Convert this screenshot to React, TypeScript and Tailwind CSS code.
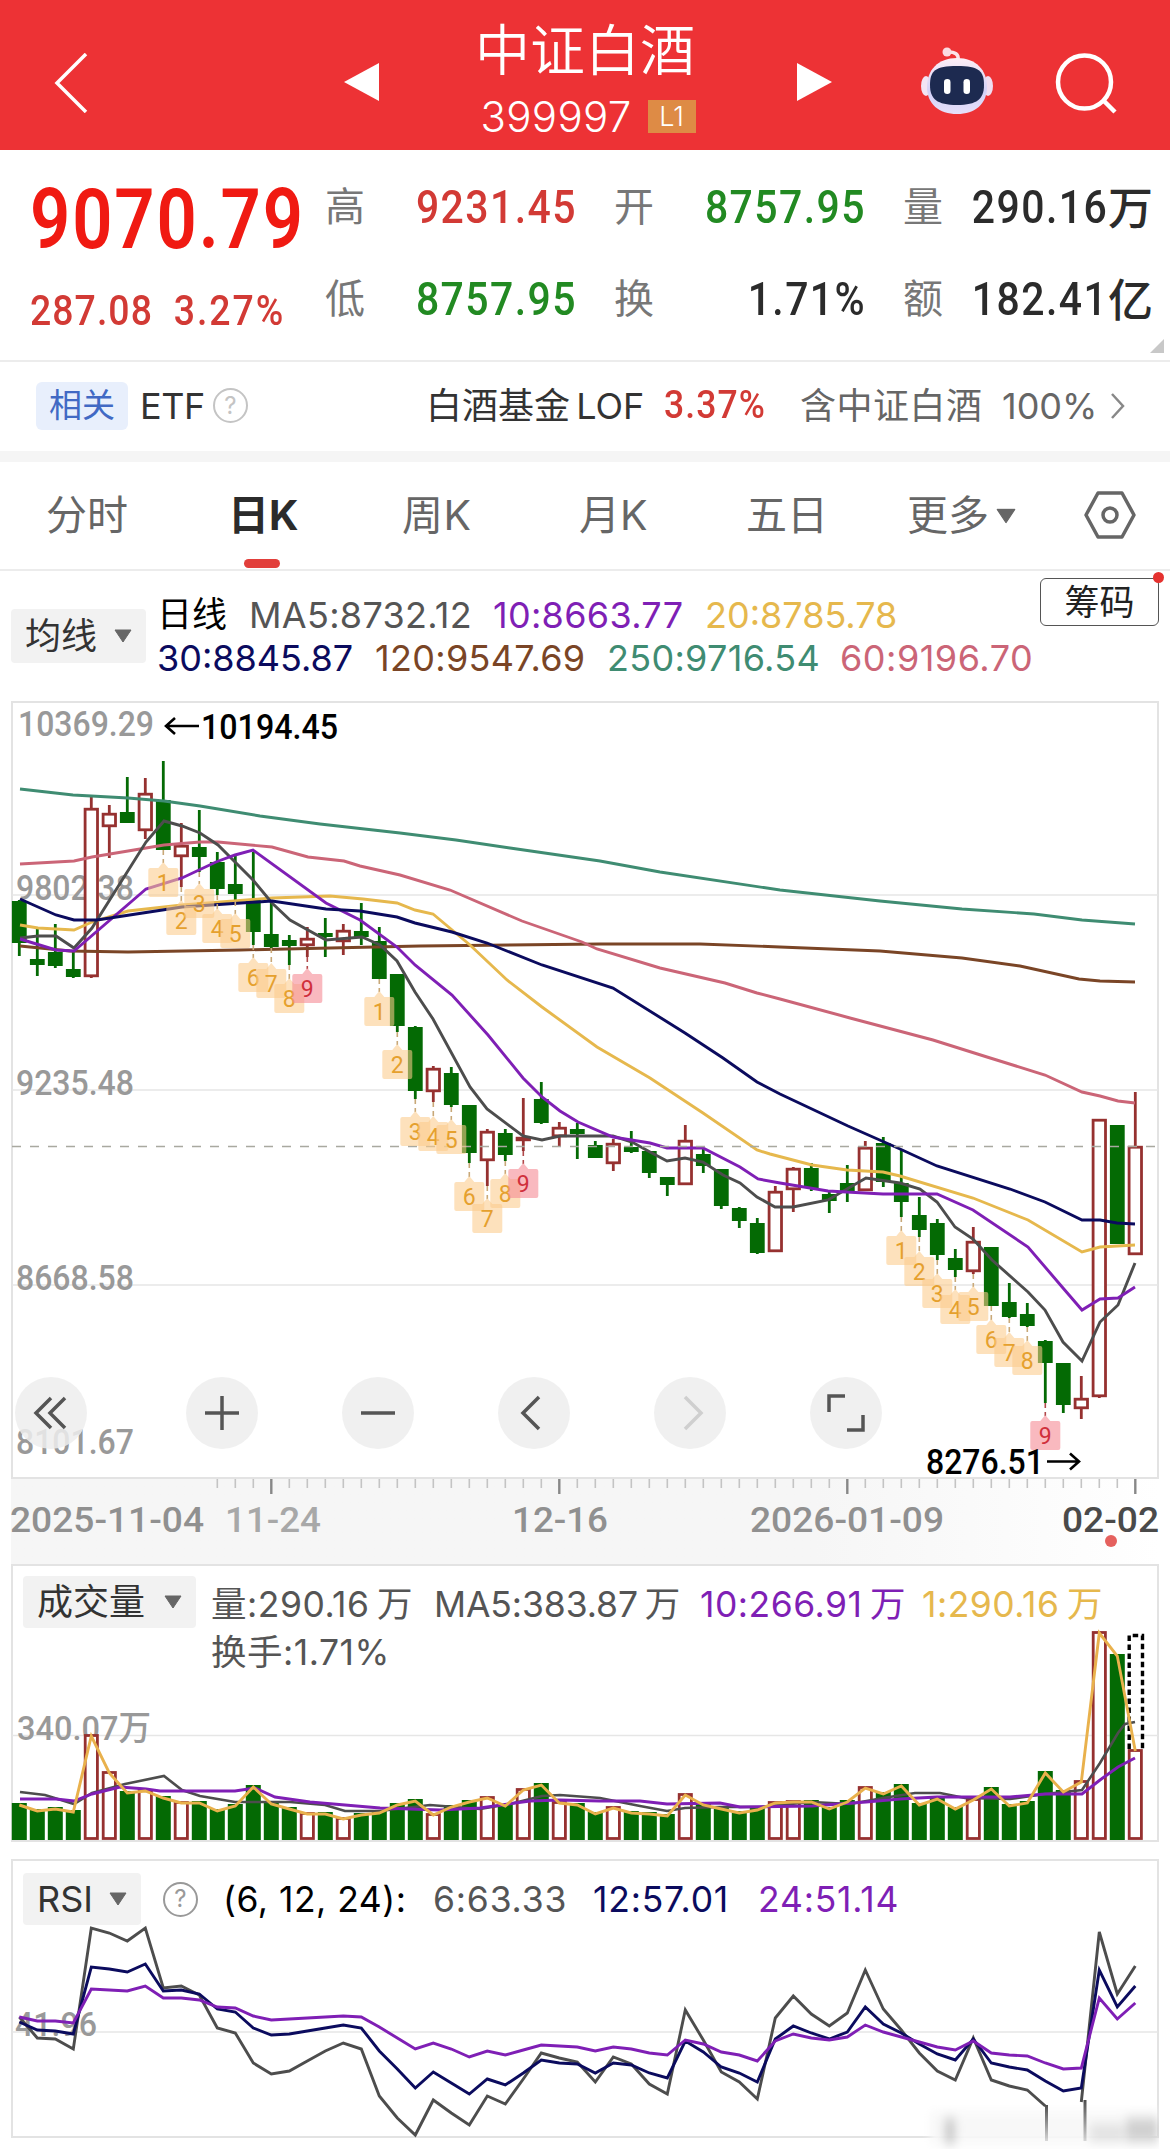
import React from "react";

const UP = "#963130";
const DOWN = "#046a04";

const STEP = 18;
const xAt = (i: number) => 19.3 + STEP * i;

// [direction, high, open/close top, open/close bottom, low]
type Candle = [string, number, number, number, number];

const candles: Candle[] = [
  ["g", 900, 901, 943, 956], ["g", 929, 959, 965, 976], ["g", 924, 952, 966, 968],
  ["g", 952, 969, 977, 978], ["r", 797, 808, 977, 978], ["r", 805, 813, 827, 858],
  ["g", 777, 812, 823, 823], ["r", 778, 793, 831, 839], ["g", 761, 800, 850, 850],
  ["r", 823, 845, 857, 887], ["g", 810, 847, 857, 872], ["g", 852, 862, 889, 895],
  ["g", 856, 884, 894, 901], ["g", 852, 899, 932, 945], ["g", 903, 934, 947, 948],
  ["g", 935, 940, 946, 965], ["r", 927, 938, 946, 957], ["g", 918, 933, 937, 957],
  ["r", 924, 930, 942, 955], ["g", 903, 931, 937, 945], ["g", 927, 941, 979, 979],
  ["g", 974, 974, 1026, 1032], ["g", 1026, 1027, 1091, 1099], ["r", 1066, 1068, 1092, 1102],
  ["g", 1067, 1073, 1105, 1107], ["g", 1105, 1105, 1153, 1163], ["r", 1129, 1131, 1161, 1186],
  ["g", 1129, 1133, 1155, 1161], ["r", 1098, 1137, 1141, 1151], ["g", 1082, 1099, 1123, 1124],
  ["r", 1122, 1127, 1137, 1146], ["g", 1123, 1129, 1134, 1159], ["g", 1141, 1145, 1158, 1158],
  ["r", 1139, 1143, 1164, 1171], ["g", 1131, 1147, 1152, 1153], ["g", 1151, 1151, 1173, 1178],
  ["g", 1177, 1177, 1185, 1196], ["r", 1125, 1140, 1185, 1185], ["g", 1148, 1154, 1166, 1173],
  ["g", 1169, 1169, 1206, 1209], ["g", 1207, 1208, 1221, 1228], ["g", 1218, 1223, 1253, 1254],
  ["r", 1186, 1191, 1252, 1252], ["r", 1167, 1168, 1190, 1212], ["g", 1163, 1168, 1188, 1191],
  ["g", 1190, 1194, 1201, 1213], ["g", 1165, 1183, 1191, 1202], ["r", 1141, 1147, 1191, 1191],
  ["g", 1137, 1143, 1182, 1187], ["g", 1149, 1183, 1202, 1217], ["g", 1197, 1215, 1230, 1237],
  ["g", 1219, 1223, 1255, 1260], ["g", 1249, 1258, 1270, 1277], ["r", 1227, 1241, 1272, 1274],
  ["g", 1247, 1247, 1306, 1306], ["g", 1283, 1302, 1317, 1318], ["g", 1303, 1314, 1326, 1327],
  ["g", 1340, 1341, 1363, 1403], ["g", 1363, 1363, 1405, 1413], ["r", 1376, 1398, 1409, 1419],
  ["r", 1119, 1119, 1397, 1398], ["g", 1125, 1125, 1244, 1244], ["r", 1092, 1146, 1255, 1255],
];

// [candle index, count, top of the tag]
const tags: [number, number, number][] = [
  [8, 1, 868], [9, 2, 906], [10, 3, 889], [11, 4, 914], [12, 5, 919], [13, 6, 963],
  [14, 7, 969], [15, 8, 984], [16, 9, 974],
  [20, 1, 997], [21, 2, 1050], [22, 3, 1117], [23, 4, 1122], [24, 5, 1125], [25, 6, 1182],
  [26, 7, 1204], [27, 8, 1179], [28, 9, 1169],
  [49, 1, 1236], [50, 2, 1257], [51, 3, 1279], [52, 4, 1295], [53, 5, 1292], [54, 6, 1325],
  [55, 7, 1338], [56, 8, 1346], [57, 9, 1421],
];

const priceLines = [
  {
    color: "#3f8c72",
    points:
      "20,789 73,795 128,798 164,801 200,806 260,816 320,824 400,833 456,840 510,848 600,861 660,872 780,890 880,901 962,909 1034,914 1082,920 1135,924",
  },
  {
    color: "#7a4526",
    points:
      "20,946 70,951 128,952 240,950 330,948 420,946 600,944 700,944 780,947 880,951 962,958 1020,966 1079,979 1100,981 1135,982",
  },
  {
    color: "#cb6577",
    points:
      "20,864 74,861 92,857 128,851 164,845 200,842 218,842 272,847 308,857 344,861 360,866 400,875 450,890 522,921 582,942 597,949 660,968 725,983 757,993 780,999 850,1018 933,1040 987,1057 1045,1075 1082,1092 1100,1096 1118,1101 1135,1103",
  },
  {
    color: "#e6b84d",
    points:
      "20,925 38,928 74,930 92,922 128,911 182,905 272,898 330,896 363,899 397,903 415,910 433,914 470,945 507,980 542,1007 597,1047 650,1078 703,1113 757,1150 770,1154 812,1165 847,1170 883,1172 900,1176 973,1198 1028,1220 1082,1252 1100,1247 1135,1245",
  },
  {
    color: "#4d4d4d",
    points:
      "20,938 38,936 56,936 74,948 92,928 146,842 164,821 182,826 200,833 218,845 253,880 272,903 290,920 326,940 362,937 380,945 397,961 415,992 433,1019 470,1087 487,1109 523,1136 542,1140 560,1136 613,1136 632,1142 650,1152 667,1161 685,1158 703,1162 723,1175 740,1183 757,1197 775,1207 793,1207 828,1200 866,1178 900,1183 920,1189 937,1202 955,1227 973,1239 992,1260 1028,1292 1045,1310 1063,1342 1082,1361 1100,1322 1118,1305 1135,1263",
  },
  {
    color: "#7f1fb5",
    points:
      "20,939 56,950 74,951 146,889 182,878 216,862 235,855 253,850 326,903 360,920 397,947 415,965 452,995 488,1035 523,1078 542,1097 560,1111 578,1122 613,1137 650,1143 667,1148 703,1148 740,1167 758,1179 780,1183 828,1191 883,1194 937,1194 973,1210 1028,1247 1063,1288 1082,1310 1100,1299 1118,1298 1135,1287",
  },
  {
    color: "#0b0b5e",
    points:
      "20,899 56,915 74,920 97,920 182,907 272,901 326,909 360,911 397,917 415,923 452,932 487,943 542,965 613,988 685,1033 723,1058 757,1082 780,1094 848,1126 900,1149 937,1166 1010,1189 1045,1202 1082,1220 1100,1220 1117,1223 1135,1224",
  },
];

const volumeTops = [
  1803, 1809, 1807, 1810, 1734, 1771, 1791, 1789, 1796, 1801, 1801, 1809, 1804, 1785, 1802, 1807,
  1812, 1812, 1817, 1813, 1811, 1803, 1799, 1813, 1805, 1800, 1796, 1804, 1788, 1783, 1801, 1803,
  1812, 1806, 1811, 1812, 1814, 1793, 1803, 1807, 1811, 1808, 1801, 1800, 1800, 1807, 1800, 1786,
  1792, 1784, 1803, 1797, 1807, 1798, 1787, 1804, 1801, 1771, 1790, 1780, 1631, 1654, 1749,
];

const rsi24 = [
  2017, 2021, 2021, 2023, 1989, 1990, 1991, 1986, 1998, 1998, 2000, 2007, 2008, 2016, 2020, 2019,
  2018, 2017, 2016, 2017, 2027, 2038, 2049, 2043, 2049, 2057, 2051, 2055, 2050, 2045, 2046, 2047,
  2051, 2047, 2049, 2053, 2055, 2040, 2044, 2052, 2055, 2061, 2041, 2034, 2038, 2040, 2037, 2025,
  2032, 2037, 2042, 2047, 2050, 2041, 2053, 2055, 2056, 2063, 2069, 2068, 1998, 2019, 2003,
];

const rsi12 = [
  2022, 2030, 2031, 2034, 1967, 1969, 1972, 1964, 1991, 1990, 1994, 2009, 2012, 2028, 2035, 2034,
  2031, 2028, 2025, 2028, 2051, 2069, 2088, 2072, 2083, 2094, 2079, 2085, 2073, 2060, 2063, 2064,
  2073, 2063, 2065, 2073, 2078, 2041, 2052, 2067, 2073, 2082, 2039, 2026, 2033, 2039, 2032, 2007,
  2024, 2033, 2044, 2054, 2060, 2039, 2063, 2067, 2070, 2081, 2091, 2088, 1970, 2007, 1986,
];

const rsi6 = [
  2017, 2038, 2039, 2049, 1928, 1933, 1941, 1928, 1988, 1986, 1995, 2028, 2033, 2063, 2074, 2071,
  2061, 2051, 2043, 2049, 2096, 2118, 2135, 2100, 2113, 2125, 2096, 2104, 2079, 2053, 2058, 2062,
  2082, 2057, 2064, 2084, 2094, 2010, 2040, 2072, 2082, 2099, 2018, 1996, 2014, 2026, 2013, 1970,
  2009, 2030, 2053, 2071, 2080, 2038, 2080, 2086, 2090, 2106,
];

const toPoints = (values: number[], from = 0) =>
  values.map((y, i) => `${xAt(i + from)},${y}`).join(" ");

const Line: React.FC<{ points: string; color: string; width?: number }> = ({
  points,
  color,
  width = 2.9,
}) => <polyline points={points} fill="none" stroke={color} strokeWidth={width} />;

interface LabelProps {
  x: number;
  y: number;
  w: number;
  size?: number;
  fill?: string;
  weight?: number;
  children: string;
}

const Label: React.FC<LabelProps> = ({ x, y, w, size = 35, fill = "#999", weight = 500, children }) => (
  <text
    x={x}
    y={y}
    textLength={w}
    lengthAdjust="spacingAndGlyphs"
    fontSize={size}
    fontWeight={weight}
    fill={fill}
    className="font-[Roboto,'Noto_Sans_CJK_SC',sans-serif]">
    {children}
  </text>
);

const Caret: React.FC<{ className?: string }> = ({ className = "" }) => (
  <svg viewBox="0 0 18 14" className={`w-[18px] h-[14px] shrink-0 ${className}`}>
    <path d="M1 1h16L9 13z" fill="#666" stroke="#666" strokeLinejoin="round" />
  </svg>
);

const Help: React.FC<{ color: string; className?: string }> = ({ color, className = "" }) => (
  <span
    className={`flex items-center justify-center w-[35px] h-[35px] rounded-full border-[2.5px] text-[24px] leading-none font-[Inter,sans-serif] ${className}`}
    style={{ borderColor: color, color }}>
    ?
  </span>
);

const Robot: React.FC = () => (
  <svg viewBox="0 0 74 70" className="w-[74px] h-[70px]">
    <defs>
      <linearGradient id="shell" x1="0" y1="0" x2="0" y2="1">
        <stop offset="0" stopColor="#fdeef6" />
        <stop offset="0.6" stopColor="#d3d0f7" />
        <stop offset="1" stopColor="#e6e0fa" />
      </linearGradient>
    </defs>
    <path d="M38 15c1-6-3-8-10-8" fill="none" stroke="#fbe3ea" strokeWidth="3.5" />
    <circle cx="27" cy="7" r="4.500" fill="#fbdbe2" />
    <ellipse cx="6" cy="41" rx="5" ry="10" fill="#f3e4f4" />
    <ellipse cx="68" cy="41" rx="5" ry="10" fill="#f0dcf0" />
    <path d="M37 13c19 0 30 12 30 29 0 17-12 27-30 27S7 59 7 42C7 25 18 13 37 13z" fill="url(#shell)" />
    <path d="M37 21c22 0 27 5 27 19s-7 20-27 20S10 54 10 40s5-19 27-19z" fill="#1d2a50" />
    <rect x="24" y="34" width="6.500" height="15" rx="3.200" fill="#fff" />
    <rect x="43.500" y="34" width="6.500" height="15" rx="3.200" fill="#fff" />
  </svg>
);

const Header: React.FC = () => (
  <header className="flex items-center h-[150px] bg-[#ed3235] text-white">
    <svg viewBox="0 0 34 60" className="w-[34px] h-[60px] ml-[54px] mt-[15px]">
      <path d="M32 1L3 30l29 29" fill="none" stroke="#fff" strokeWidth="3.5" />
    </svg>
    <svg viewBox="0 0 35 38" className="w-[35px] h-[38px] ml-[256px] mt-[13px]">
      <path d="M0 19L35 0v38z" fill="#fff" />
    </svg>
    <div className="flex flex-col items-center w-[418px]">
      <h1 className="relative -left-[3px] text-[55px] leading-[66px] pt-[16px] font-[350]">中证白酒</h1>
      <div className="flex items-center gap-[16px] h-[66px] text-[42px] font-[350]">
        <span className="tracking-[0.3px]">399997</span>
        <span className="flex items-center justify-center w-[48px] h-[33px] bg-[#de8b45] text-[27px] leading-none">
          L1
        </span>
      </div>
    </div>
    <svg viewBox="0 0 35 38" className="w-[35px] h-[38px] mt-[13px]">
      <path d="M35 19L0 0v38z" fill="#fff" />
    </svg>
    <div className="ml-[88px] mt-[9px]">
      <Robot />
    </div>
    <svg viewBox="0 0 64 64" className="w-[64px] h-[64px] ml-[60px] mt-[17px]" fill="none" stroke="#fff" strokeWidth="4.500">
      <circle cx="30.500" cy="30" r="26.500" />
      <path d="M49 48l12 12" />
    </svg>
  </header>
);

const Stat: React.FC<{ label: string; value: string; unit?: string; tone: string; labelWidth: string }> = ({
  label,
  value,
  unit,
  tone,
  labelWidth,
}) => (
  <div className="flex items-center h-[92px]">
    <span className={`text-[40px] text-[#777] shrink-0 ${labelWidth}`}>{label}</span>
    <span className={`grow flex items-center justify-end font-[Roboto,sans-serif] font-medium text-[46px] ${tone}`}>
      <span className="origin-right scale-x-[0.89] tracking-[1.6px] -mr-[2px]">{value}</span>
      {unit && <span className="ml-[2px] font-['Noto_Sans_CJK_SC',sans-serif] text-[45px] leading-none -mt-1">{unit}</span>}
    </span>
  </div>
);

const Quote: React.FC = () => (
  <section className="relative flex h-[212px] border-b-2 border-[#ececec]">
    <div className="ml-[30px] w-[295px] font-[Roboto,sans-serif] whitespace-nowrap">
      <div className="origin-left scale-x-[0.85] mt-[21px] h-[96px] leading-[98px] text-[83px] font-semibold text-[#f01a12] tracking-[2.2px]">
        9070.79
      </div>
      <div className="origin-left scale-x-[0.87] flex gap-[24px] mt-[18px] h-[50px] leading-[50px] text-[43px] font-medium text-[#d23a35] tracking-[1.2px]">
        <span>287.08</span>
        <span className="tracking-[2.2px]">3.27%</span>
      </div>
    </div>
    <div className="grid grid-cols-[250px_250px_250px] gap-x-[39px] content-start mt-[11px]">
      <Stat label="高" value="9231.45" tone="text-[#d23a35]" labelWidth="w-[60px]" />
      <Stat label="开" value="8757.95" tone="text-[#228a22]" labelWidth="w-[60px]" />
      <Stat label="量" value="290.16" unit="万" tone="text-[#2b2b2b]" labelWidth="w-[40px]" />
      <Stat label="低" value="8757.95" tone="text-[#228a22]" labelWidth="w-[60px]" />
      <Stat label="换" value="1.71%" tone="text-[#2b2b2b]" labelWidth="w-[60px]" />
      <Stat label="额" value="182.41" unit="亿" tone="text-[#2b2b2b]" labelWidth="w-[40px]" />
    </div>
    <svg viewBox="0 0 14 14" className="absolute right-[6px] bottom-[7px] w-[14px] h-[14px]">
      <path d="M14 0v14H0z" fill="#c8c8c8" />
    </svg>
  </section>
);

const Related: React.FC = () => (
  <section className="flex items-center h-[100px] pb-[2px] text-[36px] text-[#333] border-b-[11px] border-[#f5f5f5] whitespace-nowrap">
    <span className="flex items-center justify-center ml-[36px] w-[92px] h-[48px] rounded-md bg-[#e8effc] text-[#4169c4] text-[33px]">
      相关
    </span>
    <span className="ml-[12px] w-[64px] tracking-[-0.5px]">ETF</span>
    <Help color="#c4c4c4" className="ml-[9px]" />
    <span className="ml-[178px] w-[238px] [word-spacing:-4px]">白酒基金 LOF</span>
    <span className="w-[136px] font-[Roboto,sans-serif] font-medium">
      <span className="inline-block origin-left scale-x-[0.91] text-[39px] tracking-[1.2px] text-[#d23a35]">3.37%</span>
    </span>
    <span className="w-[202px] text-[#666] tracking-[0.5px]">含中证白酒</span>
    <span className="w-[108px] text-[#666]">100%</span>
    <svg viewBox="0 0 15 26" className="w-[15px] h-[26px]">
      <path d="M2 1l11 12L2 25" fill="none" stroke="#888" strokeWidth="2.5" />
    </svg>
  </section>
);

const Tabs: React.FC = () => (
  <nav className="flex h-[109px] border-b-2 border-[#ececec] text-[41px] text-[#666] leading-[107px] whitespace-nowrap">
    <span className="ml-[46px] w-[182px]">分时</span>
    <span className="relative w-[174px] font-bold text-[#2b2b2b]">
      日K
      <i className="absolute left-[16px] bottom-[1px] w-[36px] h-[9px] rounded-full bg-[#e23f3b]" />
    </span>
    <span className="w-[177px] tracking-[0.5px]">周K</span>
    <span className="w-[167px]">月K</span>
    <span className="w-[161px]">五日</span>
    <span className="flex items-center gap-[8px] w-[177px]">
      更多
      <Caret className="scale-110" />
    </span>
    <svg viewBox="0 0 52 48" className="w-[52px] h-[48px] mt-[29px]" fill="none" stroke="#666" strokeWidth="3.5">
      <path d="M14 2h24l12 22-12 22H14L2 24z" strokeLinejoin="round" />
      <circle cx="26" cy="24" r="7" />
    </svg>
  </nav>
);

const Picker: React.FC<{ text: string; className: string }> = ({ text, className }) => (
  <button type="button" className={`flex items-center justify-between px-[14px] rounded bg-[#f2f2f2] text-[#333] text-[36px] leading-none shrink-0 ${className}`}>
    {text}
    <Caret />
  </button>
);

const Legend: React.FC = () => (
  <section className="relative flex h-[129px] whitespace-nowrap text-[36px]">
    <Picker text="均线" className="ml-[11px] mt-[38px] w-[135px] h-[54px]" />
    <div className="ml-[11px] mt-[22px] tracking-[0.3px]">
      <div className="flex items-center h-[43px] leading-none">
        <span className="w-[92px] text-[35px] tracking-normal text-black">日线</span>
        <span className="w-[244px] text-[#555]">MA5:8732.12</span>
        <span className="w-[212px] text-[#7f1fb5]">10:8663.77</span>
        <span className="text-[#e6b84d] tracking-normal">20:8785.78</span>
      </div>
      <div className="flex items-center h-[43px] leading-none">
        <span className="w-[218px] text-[#0b0b5e] tracking-normal">30:8845.87</span>
        <span className="w-[232px] text-[#7a4526]">120:9547.69</span>
        <span className="w-[233px] text-[#3f8c72]">250:9716.54</span>
        <span className="text-[#cb6577] tracking-[0.5px]">60:9196.70</span>
      </div>
    </div>
    <div className="absolute left-[1040px] top-[7px] flex items-center justify-center w-[119px] h-[48px] border-[1.5px] border-[#555] rounded-md text-[35px] text-[#222] leading-none">
      筹码
      <i className="absolute -right-[6px] -top-[7px] w-[11px] h-[11px] rounded-full bg-[#e5322f]" />
    </div>
  </section>
);

const CandleBar: React.FC<{ candle: Candle; x: number }> = ({ candle, x }) => {
  const [dir, high, top, bottom, low] = candle;
  const color = dir === "g" ? DOWN : UP;
  return (
    <g stroke={color} strokeWidth={2.8}>
      <path d={`M${x} ${high}V${top}M${x} ${bottom}V${low}`} />
      {dir === "g" ? (
        <rect x={x - 7.4} y={top} width={14.8} height={bottom - top} fill={color} stroke="none" />
      ) : (
        <rect x={x - 6.2} y={top + 1.2} width={12.4} height={Math.max(bottom - top - 2.4, 1)} fill="#fff" />
      )}
    </g>
  );
};

const Tag: React.FC<{ index: number; count: number; top: number }> = ({ index, count, top }) => {
  const x = xAt(index);
  const last = count === 9;
  return (
    <g>
      <path d={`M${x} ${candles[index][4]}V${top - 5}`} stroke={last ? "#b0484a" : "#c8a878"} strokeWidth={1.6} strokeDasharray="5 4" />
      <path
        d={`M${x - 13} ${top}h8l5 -6l5 6h8q2 0 2 2v25q0 2 -2 2h-26q-2 0 -2 -2v-25q0 -2 2 -2z`}
        fill={last ? "#f58a95" : "#fbcb8c"}
        opacity={last ? 0.6 : 0.58}
      />
      <text
        x={x}
        y={top + 23}
        textAnchor="middle"
        fontSize={23}
        fill={last ? "#d0303c" : "#e5a02e"}
        className="font-[Roboto,sans-serif]">
        {count}
      </text>
    </g>
  );
};

const Round: React.FC<{ children: React.ReactNode; faded?: boolean }> = ({ children, faded }) => (
  <button type="button" className="flex items-center justify-center w-[72px] h-[72px] rounded-full bg-[#ededed]/85">
    <svg viewBox="0 0 40 40" className="w-[40px] h-[40px]" fill="none" stroke={faded ? "#cfcfcf" : "#555"} strokeWidth="3.5">
      {children}
    </svg>
  </button>
);

const PriceChart: React.FC = () => (
  <section className="relative mx-[11px]">
    <svg viewBox="11 700 1148 779" className="block w-[1148px] h-[779px]">
      <rect x="12" y="702" width="1146" height="776" fill="none" stroke="#e3e3e3" strokeWidth="2" />
      <path d="M12 895H1158M12 1090H1158M12 1285H1158" stroke="#e6e6e6" strokeWidth="1.6" />
      <Label x={18} y={736} w={136}>10369.29</Label>
      <Label x={16} y={900} w={118}>9802.38</Label>
      <Label x={16} y={1095} w={118}>9235.48</Label>
      <Label x={16} y={1290} w={118}>8668.58</Label>
      <Label x={16} y={1454} w={118}>8101.67</Label>
      {candles.map((c, i) => (
        <CandleBar key={i} candle={c} x={xAt(i)} />
      ))}
      {priceLines.map((l) => (
        <Line key={l.color} points={l.points} color={l.color} />
      ))}
      <path d="M12 1146.5H1158" stroke="#a9a9a0" strokeWidth="1.5" strokeDasharray="9 9" />
      {tags.map(([i, n, top]) => (
        <Tag key={i} index={i} count={n} top={top} />
      ))}
      <g fill="none" stroke="#000" strokeWidth="2.6">
        <path d="M199 726H166M175 718l-9 8 9 8" />
        <path d="M1047 1461.5h32M1070 1453.500l9 8 -9 8" />
      </g>
      <Label x={201} y={739} w={137} fill="#000">10194.45</Label>
      <Label x={926} y={1474} w={118} fill="#000">8276.51</Label>
    </svg>
    <div className="absolute left-[4px] top-[677px] flex">
      <div className="mr-[99px]">
        <Round>
          <path d="M20 5L5 20l15 15M34 5L19 20l15 15" />
        </Round>
      </div>
      <div className="flex gap-[84px]">
        <Round>
          <path d="M20 3v34M3 20h34" />
        </Round>
        <Round>
          <path d="M3 20h34" />
        </Round>
        <Round>
          <path d="M25 4L9 20l16 16" />
        </Round>
        <Round faded>
          <path d="M15 4l16 16-16 16" />
        </Round>
        <Round>
          <path d="M3 19V3h16M37 22v15H21" />
        </Round>
      </div>
    </div>
  </section>
);

const majorTicks = [14, 30, 46, 62];

const TimeAxis: React.FC = () => (
  <section className="mx-[11px] h-[85px] bg-linear-to-r from-[#f6f6f6] from-70% to-white">
    <svg viewBox="11 1479 1148 85" className="block w-[1148px] h-[85px]">
      {candles.map((_, i) => {
        if (i < 11) return null;
        const major = majorTicks.includes(i);
        return (
          <path
            key={i}
            d={`M${xAt(i)} 1479v${major ? 15 : 9}`}
            stroke={major ? "#888" : "#c4c4c4"}
            strokeWidth={major ? 2.4 : 1.6}
          />
        );
      })}
      <Label x={10} y={1532} w={194} fill="#909090">2025-11-04</Label>
      <Label x={225} y={1532} w={96} fill="#a8a8a8">11-24</Label>
      <Label x={512} y={1532} w={96} fill="#909090">12-16</Label>
      <Label x={750} y={1532} w={194} fill="#909090">2026-01-09</Label>
      <Label x={1062} y={1532} w={97} fill="#4a4a4a">02-02</Label>
      <circle cx="1111" cy="1541" r="6" fill="#e5615e" />
    </svg>
  </section>
);

const VolumeChart: React.FC = () => (
  <section className="relative mx-[11px]">
    <svg viewBox="11 1564 1148 278" className="block w-[1148px] h-[278px]">
      <rect x="12" y="1565" width="1146" height="276" fill="none" stroke="#e3e3e3" strokeWidth="2" />
      <path d="M12 1735.500H1158" stroke="#e6e6e6" strokeWidth="1.6" />
      <Label x={17} y={1740} w={134} size={34}>340.07万</Label>
      {volumeTops.map((top, i) =>
        candles[i][0] === "g" ? (
          <rect key={i} x={xAt(i) - 7.5} y={top} width={15} height={1840 - top} fill={DOWN} />
        ) : (
          <rect key={i} x={xAt(i) - 6.1} y={top + 1.5} width={12.2} height={1837 - top} fill="#fff" stroke={UP} strokeWidth={2.8} />
        ),
      )}
      <path d="M1129.200 1749V1635.500H1142.500V1749" fill="none" stroke="#000" strokeWidth="3.4" strokeDasharray="5.500 3.500" />
      <Line
        color="#4d4d4d"
        width={2.6}
        points="20,1792 45,1795 74,1804 92,1793 125,1784 164,1776 182,1790 200,1796 235,1802 290,1802 325,1805 345,1811 380,1811 430,1805 480,1809 510,1804 542,1796 560,1795 600,1798 640,1806 667,1811 685,1808 720,1807 760,1807 812,1802 850,1804 883,1798 915,1793 940,1793 965,1798 1010,1799 1045,1794 1082,1790 1100,1763 1118,1733 1125,1724 1135,1722"
      />
      <Line
        color="#7f1fb5"
        points="20,1799 56,1799 74,1801 92,1794 120,1787 146,1789 160,1791 235,1791 255,1788 275,1797 310,1802 380,1808 440,1810 480,1808 530,1801 560,1800 600,1801 640,1801 667,1804 720,1803 740,1807 812,1806 866,1802 900,1799 937,1797 1010,1797 1045,1794 1082,1794 1100,1780 1118,1767 1135,1758"
      />
      <Line color="#e9b14c" points={toPoints(volumeTops.map((y) => y + 2))} />
    </svg>
    <div className="absolute left-[12px] top-[12px] flex whitespace-nowrap text-[35.5px] text-[#555]">
      <Picker text="成交量" className="w-[173px] h-[52px]" />
      <div className="ml-[15px] mt-[2px] tracking-[0.5px]">
        <div className="flex h-[54px] items-center [word-spacing:-3px]">
          <span className="w-[223px]">量:290.16 万</span>
          <span className="w-[266px] tracking-[-0.1px]">MA5:383.87 万</span>
          <span className="w-[222px] text-[#7f1fb5]">10:266.91 万</span>
          <span className="text-[#e6b84d]">1:290.16 万</span>
        </div>
        <div className="leading-[42px]">换手:1.71%</div>
      </div>
    </div>
  </section>
);

const RsiChart: React.FC = () => (
  <section className="relative mx-[11px] mt-[17px]">
    <svg viewBox="11 1859 1148 290" className="block w-[1148px] h-[290px]">
      <defs>
        <linearGradient id="fade" x1="0" y1="0" x2="0" y2="1">
          <stop offset="0" stopColor="#4d4d4d" />
          <stop offset="1" stopColor="#4d4d4d" stopOpacity="0.2" />
        </linearGradient>
        <filter id="soft" x="-20%" y="-20%" width="140%" height="140%">
          <feGaussianBlur stdDeviation="4 6" />
        </filter>
      </defs>
      <rect x="12" y="1860" width="1146" height="277" fill="none" stroke="#e3e3e3" strokeWidth="2" />
      <path d="M12 2032H1158" stroke="#e6e6e6" strokeWidth="1.6" />
      <Label x={15} y={2036} w={82} size={34}>41.96</Label>
      <g filter="url(#soft)">
        <rect x="930" y="2112" width="228" height="32" fill="#f8f8f8" />
        <rect x="944" y="2118" width="12" height="26" fill="#cfcfcf" />
        <rect x="1090" y="2124" width="34" height="18" fill="#e2e2e2" />
        <rect x="1126" y="2118" width="32" height="24" fill="#d0d0d0" />
      </g>
      <Line color="#4d4d4d" points={toPoints(rsi6)} />
      <rect x="1045" y="2105" width="3" height="36" fill="url(#fade)" />
      <rect x="1083.500" y="2100" width="3" height="41" fill="url(#fade)" />
      <Line color="#4d4d4d" points={toPoints([2102, 1932, 1994, 1966], 59)} />
      <Line color="#0b0b5e" points={toPoints(rsi12)} />
      <Line color="#7f1fb5" points={toPoints(rsi24)} />
    </svg>
    <div className="absolute left-[12px] top-[14px] flex items-center h-[52px] whitespace-nowrap text-[35.5px] text-[#555] tracking-[0.8px]">
      <Picker text="RSI" className="w-[118px] h-[52px] tracking-normal" />
      <Help color="#999" className="ml-[22px] tracking-normal" />
      <span className="ml-[25px] w-[210px] pt-[1px] tracking-[0.5px] text-black">(6, 12, 24):</span>
      <span className="w-[160px] pt-[1px]">6:63.33</span>
      <span className="w-[165px] pt-[1px] text-[#0b0b5e]">12:57.01</span>
      <span className="pt-[1px] text-[#7f1fb5]">24:51.14</span>
    </div>
  </section>
);

const App: React.FC = () => {
  return (
    <div className="w-[1170px] h-[2156px] overflow-hidden bg-white font-[Inter,'Noto_Sans_CJK_SC',sans-serif]">
      <Header />
      <Quote />
      <Related />
      <Tabs />
      <Legend />
      <PriceChart />
      <TimeAxis />
      <VolumeChart />
      <RsiChart />
    </div>
  );
};

export default App;
